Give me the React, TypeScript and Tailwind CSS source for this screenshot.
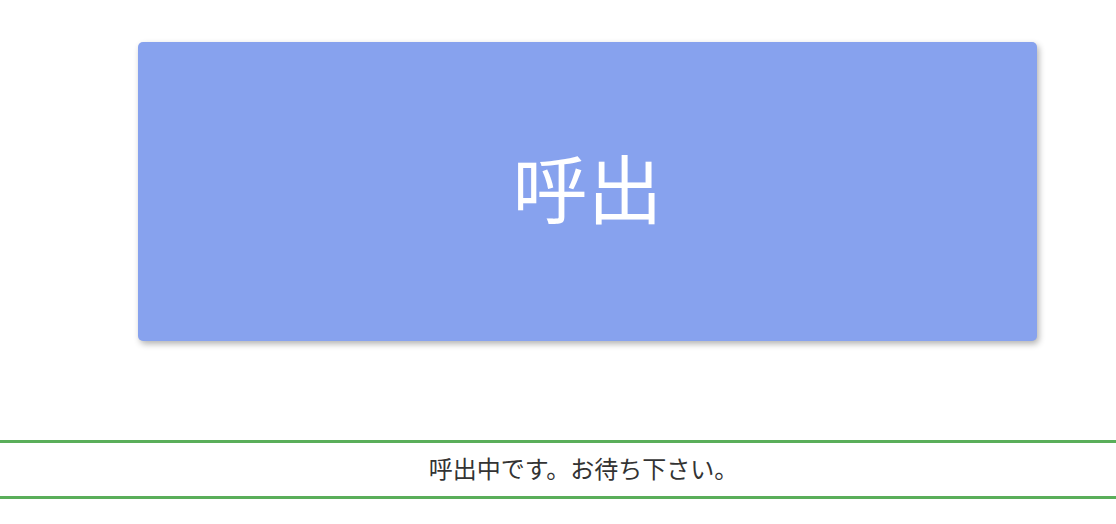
import React from "react";

export default function App() {
  const jp = { fontFamily: '"Noto Sans CJK JP", "Noto Sans", sans-serif' };
  return (
    <div className="w-[1116px] h-[524px] bg-white overflow-hidden" style={jp}>
      <div className="pt-[42px] pl-[138px] pr-[79px]">
        <button
          type="button"
          className="w-full h-[299px] rounded-[5px] bg-[#87a2ee] text-white text-[75px] leading-none flex items-center justify-center shadow-[2px_3px_6px_rgba(0,0,0,0.3)]"
        >
          <span className="-mt-[12px]">呼出</span>
        </button>
      </div>
      <div className="mt-[99px] border-y-[3px] border-[#5aae5a] h-[59px] flex items-center">
        <div className="pl-[130px] pr-[79px] w-full text-center text-[24px] leading-none text-[#333333] -mt-[4px]">
          呼出中です。お待ち下さい。
        </div>
      </div>
    </div>
  );
}
